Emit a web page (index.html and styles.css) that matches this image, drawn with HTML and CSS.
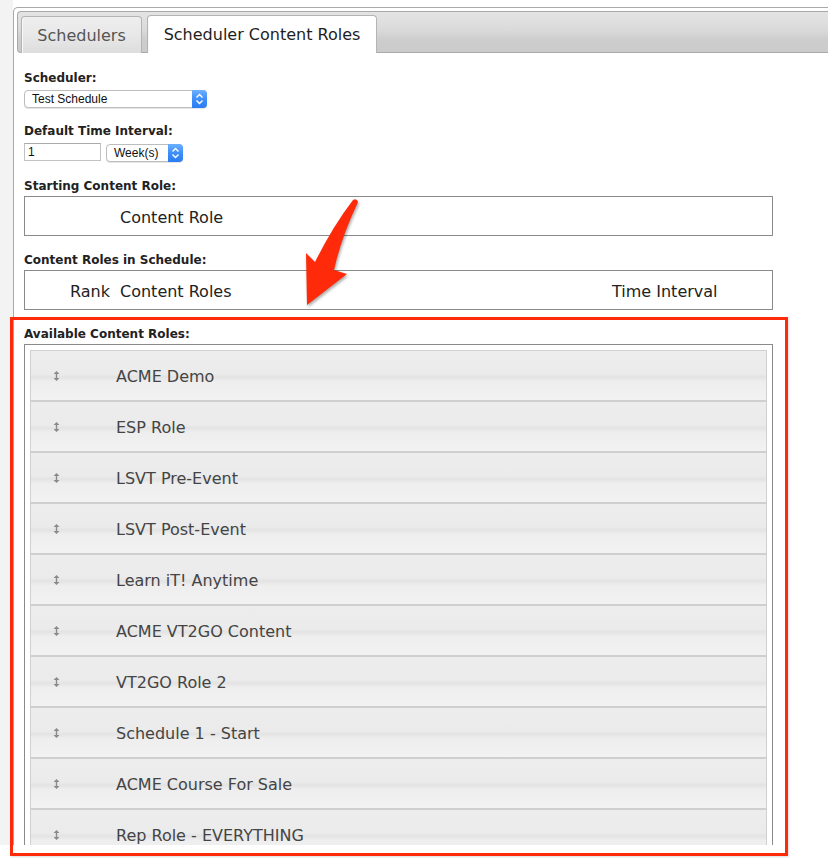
FILE: index.html
```html
<!DOCTYPE html>
<html>
<head>
<meta charset="utf-8">
<link rel="stylesheet" href="styles.css">
</head>
<body>
<div class="page">
  <div class="gutter"></div>
  <div class="panel">
    <div class="tabbar">
      <div class="tab">Schedulers</div>
      <div class="tab active">Scheduler Content Roles</div>
    </div>
    <div class="content">
      <div class="label l-first">Scheduler:</div>
      <div class="select sel-schedule">
        <span class="sel-text">Test Schedule</span>
        <span class="sel-btn"><svg width="9" height="12" viewBox="0 0 9 12"><path d="M1.5 4.5 L4.5 1.5 L7.5 4.5 M1.5 7.5 L4.5 10.5 L7.5 7.5" fill="none" stroke="#fff" stroke-width="1.4"/></svg></span>
      </div>

      <div class="label l-gap">Default Time Interval:</div>
      <div class="row">
        <div class="input">1</div>
        <div class="select sel-week">
          <span class="sel-text">Week(s)</span>
          <span class="sel-btn"><svg width="9" height="12" viewBox="0 0 9 12"><path d="M1.5 4.5 L4.5 1.5 L7.5 4.5 M1.5 7.5 L4.5 10.5 L7.5 7.5" fill="none" stroke="#fff" stroke-width="1.4"/></svg></span>
        </div>
      </div>

      <div class="label l-box">Starting Content Role:</div>
      <div class="box box-start"><span class="box-text">Content Role</span></div>

      <div class="label l-box">Content Roles in Schedule:</div>
      <div class="box box-sched">
        <span class="box-text">Rank</span><span class="box-text">Content Roles</span><span class="box-text">Time Interval</span>
      </div>

      <div class="label l-box">Available Content Roles:</div>
      <div class="box box-avail">
        <ul class="list">
          <li class="item"><span class="drag"><svg width="7" height="10" viewBox="0 0 7 10"><path d="M3.5 0 L6.5 3 L0.5 3 Z M3.5 10 L6.5 7 L0.5 7 Z" fill="#8a8a8a"/><rect x="2.8" y="2.5" width="1.4" height="5" fill="#8a8a8a"/></svg></span><span class="name">ACME Demo</span></li>
          <li class="item"><span class="drag"><svg width="7" height="10" viewBox="0 0 7 10"><path d="M3.5 0 L6.5 3 L0.5 3 Z M3.5 10 L6.5 7 L0.5 7 Z" fill="#8a8a8a"/><rect x="2.8" y="2.5" width="1.4" height="5" fill="#8a8a8a"/></svg></span><span class="name">ESP Role</span></li>
          <li class="item"><span class="drag"><svg width="7" height="10" viewBox="0 0 7 10"><path d="M3.5 0 L6.5 3 L0.5 3 Z M3.5 10 L6.5 7 L0.5 7 Z" fill="#8a8a8a"/><rect x="2.8" y="2.5" width="1.4" height="5" fill="#8a8a8a"/></svg></span><span class="name">LSVT Pre-Event</span></li>
          <li class="item"><span class="drag"><svg width="7" height="10" viewBox="0 0 7 10"><path d="M3.5 0 L6.5 3 L0.5 3 Z M3.5 10 L6.5 7 L0.5 7 Z" fill="#8a8a8a"/><rect x="2.8" y="2.5" width="1.4" height="5" fill="#8a8a8a"/></svg></span><span class="name">LSVT Post-Event</span></li>
          <li class="item"><span class="drag"><svg width="7" height="10" viewBox="0 0 7 10"><path d="M3.5 0 L6.5 3 L0.5 3 Z M3.5 10 L6.5 7 L0.5 7 Z" fill="#8a8a8a"/><rect x="2.8" y="2.5" width="1.4" height="5" fill="#8a8a8a"/></svg></span><span class="name">Learn iT! Anytime</span></li>
          <li class="item"><span class="drag"><svg width="7" height="10" viewBox="0 0 7 10"><path d="M3.5 0 L6.5 3 L0.5 3 Z M3.5 10 L6.5 7 L0.5 7 Z" fill="#8a8a8a"/><rect x="2.8" y="2.5" width="1.4" height="5" fill="#8a8a8a"/></svg></span><span class="name">ACME VT2GO Content</span></li>
          <li class="item"><span class="drag"><svg width="7" height="10" viewBox="0 0 7 10"><path d="M3.5 0 L6.5 3 L0.5 3 Z M3.5 10 L6.5 7 L0.5 7 Z" fill="#8a8a8a"/><rect x="2.8" y="2.5" width="1.4" height="5" fill="#8a8a8a"/></svg></span><span class="name">VT2GO Role 2</span></li>
          <li class="item"><span class="drag"><svg width="7" height="10" viewBox="0 0 7 10"><path d="M3.5 0 L6.5 3 L0.5 3 Z M3.5 10 L6.5 7 L0.5 7 Z" fill="#8a8a8a"/><rect x="2.8" y="2.5" width="1.4" height="5" fill="#8a8a8a"/></svg></span><span class="name">Schedule 1 - Start</span></li>
          <li class="item"><span class="drag"><svg width="7" height="10" viewBox="0 0 7 10"><path d="M3.5 0 L6.5 3 L0.5 3 Z M3.5 10 L6.5 7 L0.5 7 Z" fill="#8a8a8a"/><rect x="2.8" y="2.5" width="1.4" height="5" fill="#8a8a8a"/></svg></span><span class="name">ACME Course For Sale</span></li>
          <li class="item"><span class="drag"><svg width="7" height="10" viewBox="0 0 7 10"><path d="M3.5 0 L6.5 3 L0.5 3 Z M3.5 10 L6.5 7 L0.5 7 Z" fill="#8a8a8a"/><rect x="2.8" y="2.5" width="1.4" height="5" fill="#8a8a8a"/></svg></span><span class="name">Rep Role - EVERYTHING</span></li>
        </ul>
      </div>
    </div>
  </div>
</div>
<div class="highlight"></div>
<svg class="arrow" width="828" height="858" viewBox="0 0 828 858">
  <path d="M353 200 Q357 198 358 202 Q341 238 334 270 L347 274 L307 305 L306 253 L315 262 Q333 226 353 200 Z" fill="#ff2a0a"/>
</svg>
</body>
</html>
```

FILE: styles.css
```css
html, body {
  margin: 0;
  padding: 0;
  background: #ffffff;
}

body {
  font-family: "DejaVu Sans", Verdana, sans-serif;
  color: #222;
  position: relative;
  width: 828px;
  height: 858px;
  overflow: hidden;
}

.page {
  display: flex;
  height: 845px;
  overflow: hidden;
}

.gutter {
  width: 13px;
  flex: none;
  background: #f3f3f3;
}

.panel {
  flex: 1;
  margin-top: 7px;
  border-top: 1px solid #a9a9a9;
  border-left: 1px solid #a9a9a9;
  border-top-left-radius: 5px;
  background: #fff;
  overflow: hidden;
}

.tabbar {
  margin: 3px 0 0 3px;
  height: 40px;
  border: 1px solid #a9a9a9;
  border-right: none;
  border-radius: 4px 0 0 4px;
  background: linear-gradient(to bottom, #e4e4e4 0%, #dadada 45%, #cdcdcd 70%, #cbcbcb 100%);
  display: flex;
  align-items: flex-end;
  padding-left: 3px;
  gap: 5px;
}

.tab {
  height: 36px;
  margin-bottom: -1px;
  border: 1px solid #b4b4b4;
  border-bottom: none;
  border-radius: 4px 4px 0 0;
  display: flex;
  align-items: center;
  justify-content: center;
  font-size: 16px;
  color: #555;
  width: 119px;
  background: linear-gradient(to bottom, #eeeeee 0%, #e8e8e8 50%, #dddddd 100%);
  box-shadow: inset 1px 0 0 #f8f8f8;
}

.tab.active {
  width: 228px;
  background: #fff;
  color: #1e1e1e;
  height: 37px;
}

.content {
  padding: 17px 55px 0 10px;
}

.label {
  font-weight: bold;
  font-size: 12px;
  line-height: 15px;
  padding-top: 1px;
  color: #222;
}

.l-first {
  margin-bottom: 4px;
}

.l-gap {
  margin-top: 15px;
  margin-bottom: 4px;
}

.l-box {
  margin-top: 16px;
  margin-bottom: 2px;
}

.select {
  display: flex;
  align-items: stretch;
  height: 16px;
  border: 1px solid #bdbdbd;
  border-radius: 4px;
  background: #fff;
  font-family: "Liberation Sans", Arial, sans-serif;
  font-size: 12px;
  color: #111;
  box-shadow: 0 1px 0 #e6e6e6;
}

.sel-schedule {
  width: 181px;
}

.sel-week {
  width: 75px;
  margin-top: 1px;
}

.sel-text {
  flex: 1;
  padding-left: 7px;
  line-height: 17px;
}

.sel-btn {
  width: 15px;
  margin: -1px -1px -1px 0;
  border-radius: 0 4px 4px 0;
  background: linear-gradient(to bottom, #6cb0ff 0%, #3f8ef9 50%, #2a7df2 100%);
  display: flex;
  align-items: center;
  justify-content: center;
}

.row {
  display: flex;
  gap: 5px;
  align-items: flex-start;
}

.input {
  width: 72px;
  height: 16px;
  border: 1px solid #c3c3c3;
  border-top-color: #aaa;
  padding-left: 3px;
  font-family: "Liberation Sans", Arial, sans-serif;
  font-size: 12px;
  line-height: 17px;
  color: #111;
}

.box {
  border: 1px solid #8a8a8a;
  font-size: 16px;
  color: #222;
}

.box-start,
.box-sched {
  height: 38px;
  display: flex;
  align-items: center;
}

.box-text {
  padding-top: 2px;
}

.box-start {
  padding-left: 95px;
}

.box-sched {
  display: grid;
  grid-template-columns: 50px 492px 160px;
  padding-left: 45px;
  align-items: center;
}

.box-avail {
  padding: 5px;
  height: 600px;
}

.list {
  list-style: none;
  margin: 0;
  padding: 0;
  border-top: 1px solid #d0d0d0;
  border-left: 1px solid #d0d0d0;
  border-right: 1px solid #d0d0d0;
}

.item {
  height: 49px;
  border-bottom: 2px solid #cfcfcf;
  background: linear-gradient(to bottom, #ededed 0%, #ebebeb 47%, #e3e3e3 53%, #eeeeee 62%, #f2f2f2 100%);
  display: flex;
  align-items: center;
  font-size: 16px;
  color: #444;
}

.drag {
  width: 85px;
  padding-left: 22px;
  box-sizing: border-box;
  display: flex;
  align-items: center;
}

.name {
  line-height: 20px;
  padding-top: 2px;
}

.highlight {
  position: absolute;
  left: 10px;
  top: 317px;
  width: 772px;
  height: 533px;
  border: 3px solid #ff2a0a;
  box-shadow: 1px 1px 2px rgba(0,0,0,0.15);
}

.arrow {
  position: absolute;
  left: 0;
  top: 0;
  filter: drop-shadow(1px 2px 1.5px rgba(0,0,0,0.35));
}
```
